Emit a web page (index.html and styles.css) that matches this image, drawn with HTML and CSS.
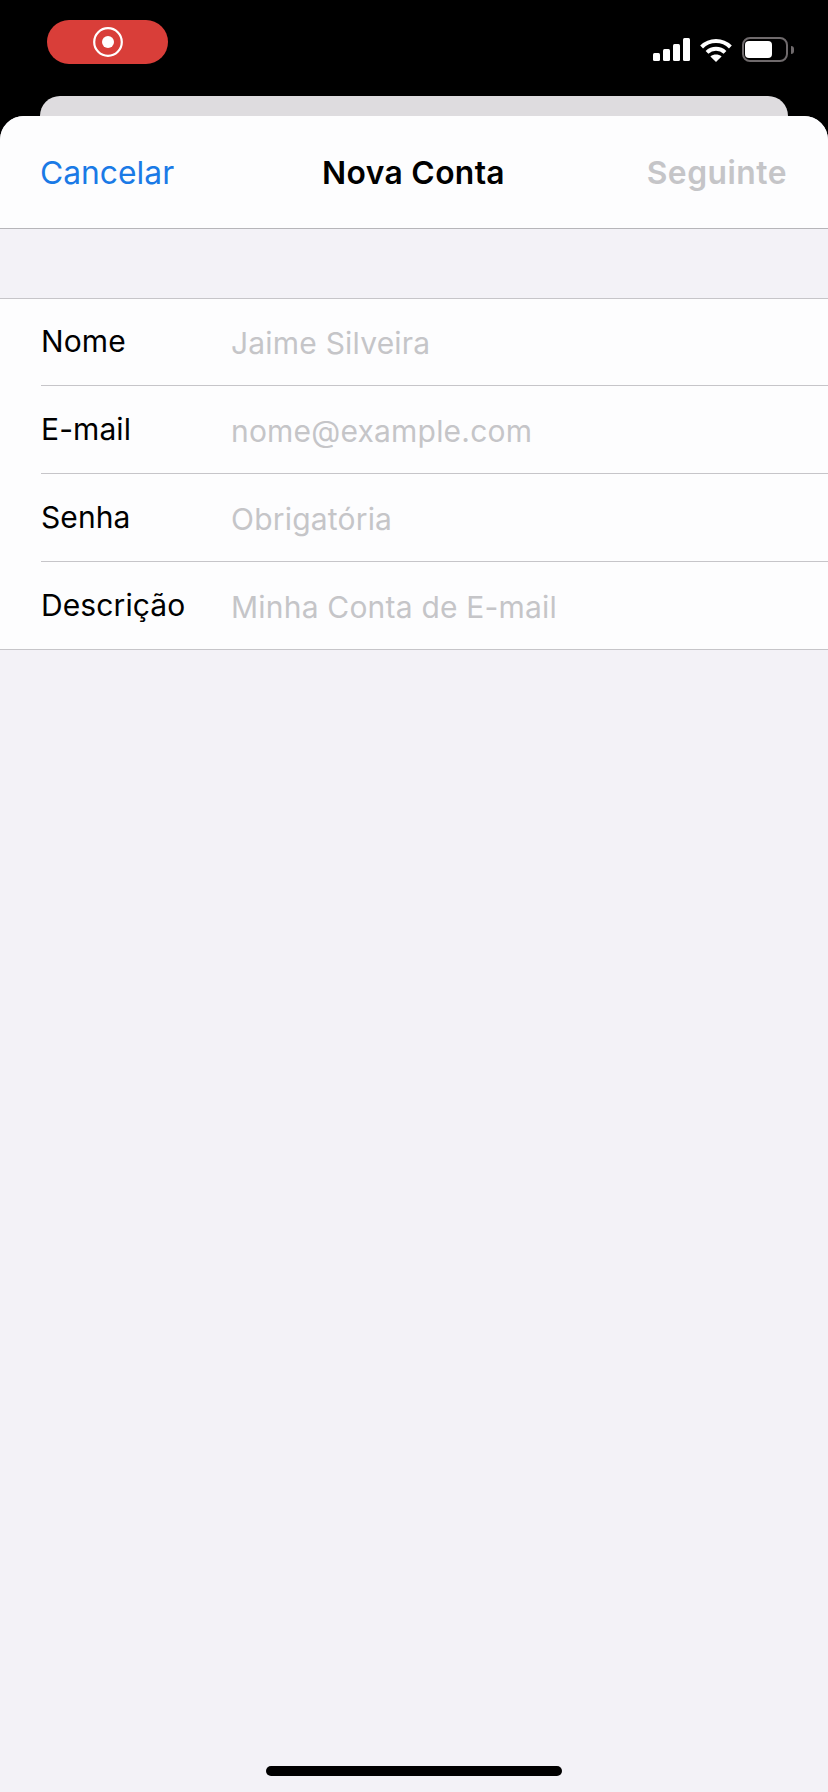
FILE: index.html
```html
<!DOCTYPE html>
<html lang="pt">
  <head>
    <meta charset="UTF-8">
    <meta name="viewport" content="width=device-width, initial-scale=1.0">
    <title>Nova Conta</title>
    <link rel="stylesheet" href="styles.css">
  </head>
  <body>
    <div class="status-bar">
      <div class="rec-pill">
        <svg width="32" height="32" viewBox="0 0 32 32">
          <circle cx="16" cy="16" r="13.8" fill="none" stroke="#fff" stroke-width="2.2"/>
          <circle cx="16" cy="16" r="6" fill="#fff"/>
        </svg>
      </div>
      <div class="status-icons">
        <svg width="37" height="24" viewBox="0 0 37 24" fill="#fff">
          <rect x="0" y="15" width="7" height="8" rx="1.5"/>
          <rect x="10" y="11" width="7" height="12" rx="1.5"/>
          <rect x="20" y="6" width="7" height="17" rx="1.5"/>
          <rect x="30" y="0" width="7" height="23" rx="1.5"/>
        </svg>
        <svg class="wifi" width="32" height="24" viewBox="0 0 32 24" fill="none" stroke="#fff" stroke-width="4">
          <path d="M1.6 9C9.6 1 22.4 1 30.4 9"/>
          <path d="M7 14.4C12 9.6 20 9.6 25 14.4"/>
          <path d="M16 24L10.4 18.4C13.6 15.8 18.4 15.8 21.6 18.4Z" fill="#fff" stroke="none"/>
        </svg>
        <div class="battery">
          <div class="battery-level"></div>
        </div>
        <div class="battery-nub"></div>
      </div>
    </div>
    <div class="back-card-wrap"><div class="back-card"></div></div>
    <div class="sheet">
      <div class="nav">
        <span class="nav-cancel">Cancelar</span>
        <span class="nav-title">Nova Conta</span>
        <span class="nav-next">Seguinte</span>
      </div>
      <div class="form">
        <div class="row"><span class="label">Nome</span><span class="value">Jaime Silveira</span></div>
        <div class="row"><span class="label">E-mail</span><span class="value">nome@example.com</span></div>
        <div class="row"><span class="label">Senha</span><span class="value">Obrigatória</span></div>
        <div class="row"><span class="label">Descrição</span><span class="value">Minha Conta de E-mail</span></div>
      </div>
      <div class="home-bar"></div>
    </div>
  </body>
</html>
```

FILE: styles.css
```css
html, body { margin: 0; padding: 0; }
body {
  width: 828px;
  height: 1792px;
  overflow: hidden;
  display: flex;
  flex-direction: column;
  background-color: #000;
  font-family: Inter, "Noto Sans", sans-serif;
  font-size: 30px;
}
.status-bar {
  height: 96px;
  flex-shrink: 0;
  display: flex;
  justify-content: space-between;
  align-items: flex-start;
  padding: 20px 34px 0 47px;
  box-sizing: border-box;
}
.rec-pill {
  width: 121px;
  height: 44px;
  border-radius: 22px;
  background-color: #d93e39;
  display: flex;
  justify-content: center;
  align-items: center;
}
.status-icons {
  display: flex;
  align-items: center;
  margin-top: 17px;
}
.wifi { margin-left: 10px; }
.battery {
  width: 46px;
  height: 25px;
  margin-left: 10px;
  border: 2px solid #6f6a6c;
  border-radius: 8px;
  padding: 2px 1px;
  box-sizing: border-box;
}
.battery-level {
  width: 27px;
  height: 100%;
  background-color: #fff;
  border-radius: 4px;
}
.battery-nub {
  width: 3px;
  height: 8px;
  margin-left: 3px;
  background-color: #6f6a6c;
  border-radius: 0 3px 3px 0;
}
.back-card-wrap {
  height: 20px;
  flex-shrink: 0;
  padding: 0 40px;
}
.back-card {
  height: 40px;
  background-color: #dedcdf;
  border-radius: 20px 20px 0 0;
}
.sheet {
  flex: 1;
  display: flex;
  flex-direction: column;
  position: relative;
  background-color: #f3f2f7;
  border-radius: 24px 24px 0 0;
  overflow: hidden;
}
.nav {
  height: 112px;
  flex-shrink: 0;
  display: flex;
  align-items: center;
  padding: 0 41px 0 40px;
  font-size: 31.8px;
  background-color: #fdfdfe;
  border-bottom: 1px solid #b6b5b9;
}
.nav-cancel { flex: 1; color: #1a7ae6; }
.nav-title { color: #000; font-weight: 600; letter-spacing: 0.35px; }
.nav-next { flex: 1; text-align: right; color: #c5c5c8; font-weight: 600; letter-spacing: 0.5px; }
.form {
  margin-top: 69px;
  background-color: #fdfdfe;
  border-top: 1px solid #c6c5c9;
  border-bottom: 1px solid #c6c5c9;
}
.row {
  height: 87px;
  margin-left: 41px;
  display: flex;
  align-items: center;
  border-bottom: 1px solid #c6c5c9;
}
.row:first-child { height: 86px; }
.row:last-child { border-bottom: 0; }
.label {
  width: 190px;
  flex-shrink: 0;
  margin-bottom: 2px;
  color: #000;
  letter-spacing: 0.1px;
}
.value { margin-top: 2px; color: #c5c5c8; letter-spacing: 0.2px; }
.home-bar {
  position: absolute;
  left: 266px;
  bottom: 16px;
  width: 296px;
  height: 10px;
  border-radius: 5px;
  background-color: #000;
}
```
